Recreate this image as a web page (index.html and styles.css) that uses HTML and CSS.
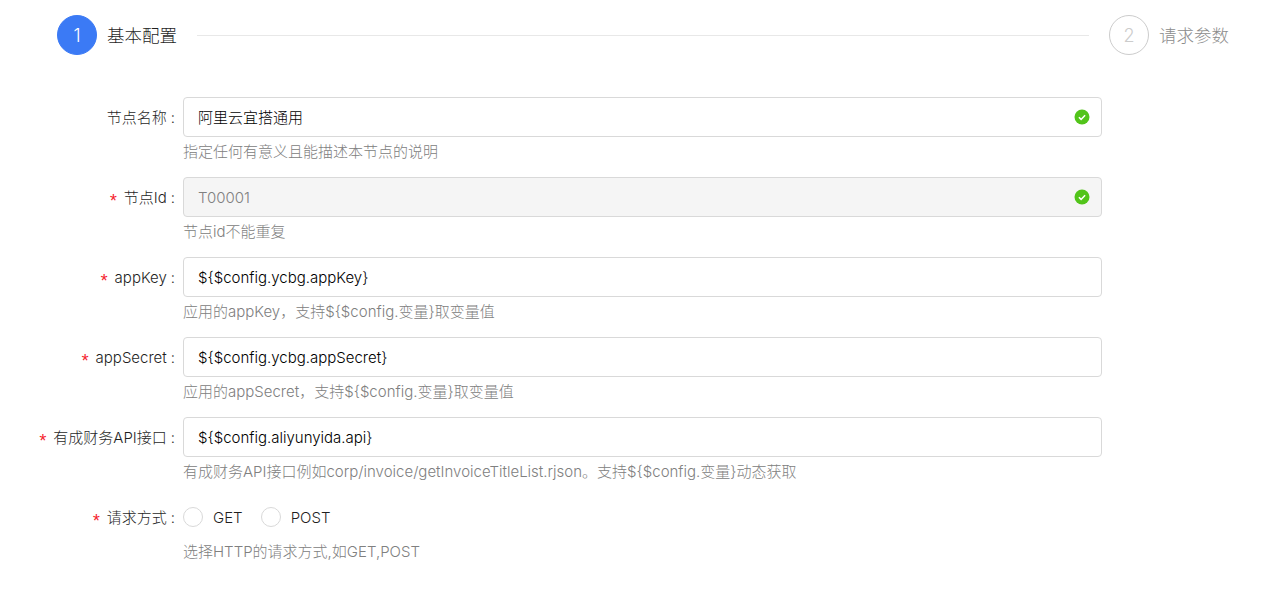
FILE: index.html
```html
<!DOCTYPE html>
<html lang="zh-CN">
<head>
<meta charset="utf-8">
<title>基本配置</title>
<link rel="stylesheet" href="styles.css">
</head>
<body>
<div class="page">
  <div class="steps">
    <div class="step active"><span class="num">1</span><span class="step-title">基本配置</span></div>
    <div class="step-line"></div>
    <div class="step"><span class="num">2</span><span class="step-title">请求参数</span></div>
  </div>
  <form class="form">
    <div class="row">
      <label class="label">节点名称<span class="colon">:</span></label>
      <div class="control">
        <div class="input"><span class="value-cjk">阿里云宜搭通用</span>
          <svg class="ok" viewBox="0 0 16 16"><circle cx="8" cy="8" r="7.5" fill="#52c41a"/><path d="M4.9 8.2l2.2 2.2 4-4.2" fill="none" stroke="#fff" stroke-width="1.5"/></svg>
        </div>
        <div class="help">指定任何有意义且能描述本节点的说明</div>
      </div>
    </div>
    <div class="row">
      <label class="label"><span class="star">*</span>节点Id<span class="colon">:</span></label>
      <div class="control">
        <div class="input disabled"><span>T00001</span>
          <svg class="ok" viewBox="0 0 16 16"><circle cx="8" cy="8" r="7.5" fill="#52c41a"/><path d="M4.9 8.2l2.2 2.2 4-4.2" fill="none" stroke="#fff" stroke-width="1.5"/></svg>
        </div>
        <div class="help">节点id不能重复</div>
      </div>
    </div>
    <div class="row">
      <label class="label"><span class="star">*</span>appKey<span class="colon">:</span></label>
      <div class="control">
        <div class="input"><span>${$config.ycbg.appKey}</span></div>
        <div class="help">应用的appKey，支持${$config.变量}取变量值</div>
      </div>
    </div>
    <div class="row">
      <label class="label"><span class="star">*</span>appSecret<span class="colon">:</span></label>
      <div class="control">
        <div class="input"><span>${$config.ycbg.appSecret}</span></div>
        <div class="help">应用的appSecret，支持${$config.变量}取变量值</div>
      </div>
    </div>
    <div class="row">
      <label class="label"><span class="star">*</span>有成财务API接口<span class="colon">:</span></label>
      <div class="control">
        <div class="input"><span>${$config.aliyunyida.api}</span></div>
        <div class="help">有成财务API接口例如corp/invoice/getInvoiceTitleList.rjson。支持${$config.变量}动态获取</div>
      </div>
    </div>
    <div class="row">
      <label class="label"><span class="star">*</span>请求方式<span class="colon">:</span></label>
      <div class="control">
        <div class="radios">
          <span class="radio"><span class="dot"></span>GET</span>
          <span class="radio"><span class="dot"></span>POST</span>
        </div>
        <div class="help">选择HTTP的请求方式,如GET,POST</div>
      </div>
    </div>
  </form>
</div>
</body>
</html>
```
FILE: styles.css
```css
* { box-sizing: border-box; }
html, body { margin: 0; padding: 0; background: #fff; }
body {
  font-family: Inter, "Noto Sans CJK SC", sans-serif;
  font-size: 15px;
  font-weight: 300;
  color: #1f1f1f;
  overflow: hidden;
}
.page { height: 601px; }
.steps {
  display: flex;
  align-items: center;
  height: 40px;
  margin: 15px 47px 0 57px;
}
.step { display: flex; align-items: center; color: #8c8c8c; }
.step.active { color: #1f1f1f; }
.num {
  display: flex;
  align-items: center;
  justify-content: center;
  width: 40px;
  height: 40px;
  border: 1px solid #ccc;
  border-radius: 50%;
  font-size: 18px;
  color: #ccc;
}
.active .num { background: #3b7af5; border-color: #3b7af5; color: #fff; }
.step-title { margin: 1px 0 0 10px; font-size: 17.5px; line-height: 28px; }
.step-line { flex: 1; height: 1px; margin: 0 20px; background: #e8e8e8; }
.form { margin-top: 42px; }
.row { display: flex; height: 80px; }
.label {
  width: 175px;
  height: 40px;
  padding-top: 1px;
  line-height: 40px;
  text-align: right;
  white-space: nowrap;
}
.colon { display: inline-block; margin-left: 4px; }
.star { color: #f5222d; margin-right: 5px; font-family: "Liberation Mono", monospace; font-size: 18px; vertical-align: -4px; line-height: 1; }
.control { width: 919px; margin-left: 8px; }
.input {
  display: flex;
  align-items: center;
  justify-content: space-between;
  height: 40px;
  padding: 0 11px 0 14px;
  border: 1px solid #d9d9d9;
  border-radius: 4px;
  background: #fff;
  color: #000;
}
.value-cjk { margin-bottom: 1px; }
.input.disabled { background: #f5f5f5; color: #808080; }
.ok { width: 16px; height: 16px; flex: none; }
.help { margin-top: 5px; line-height: 20px; color: #808080; white-space: nowrap; }
.radios { display: flex; align-items: center; height: 40px; }
.radio { display: flex; align-items: center; margin-right: 18px; color: #1f1f1f; }
.dot {
  width: 20px;
  height: 20px;
  margin-right: 10px;
  border: 1px solid #d9d9d9;
  border-radius: 50%;
  background: #fff;
}
```
